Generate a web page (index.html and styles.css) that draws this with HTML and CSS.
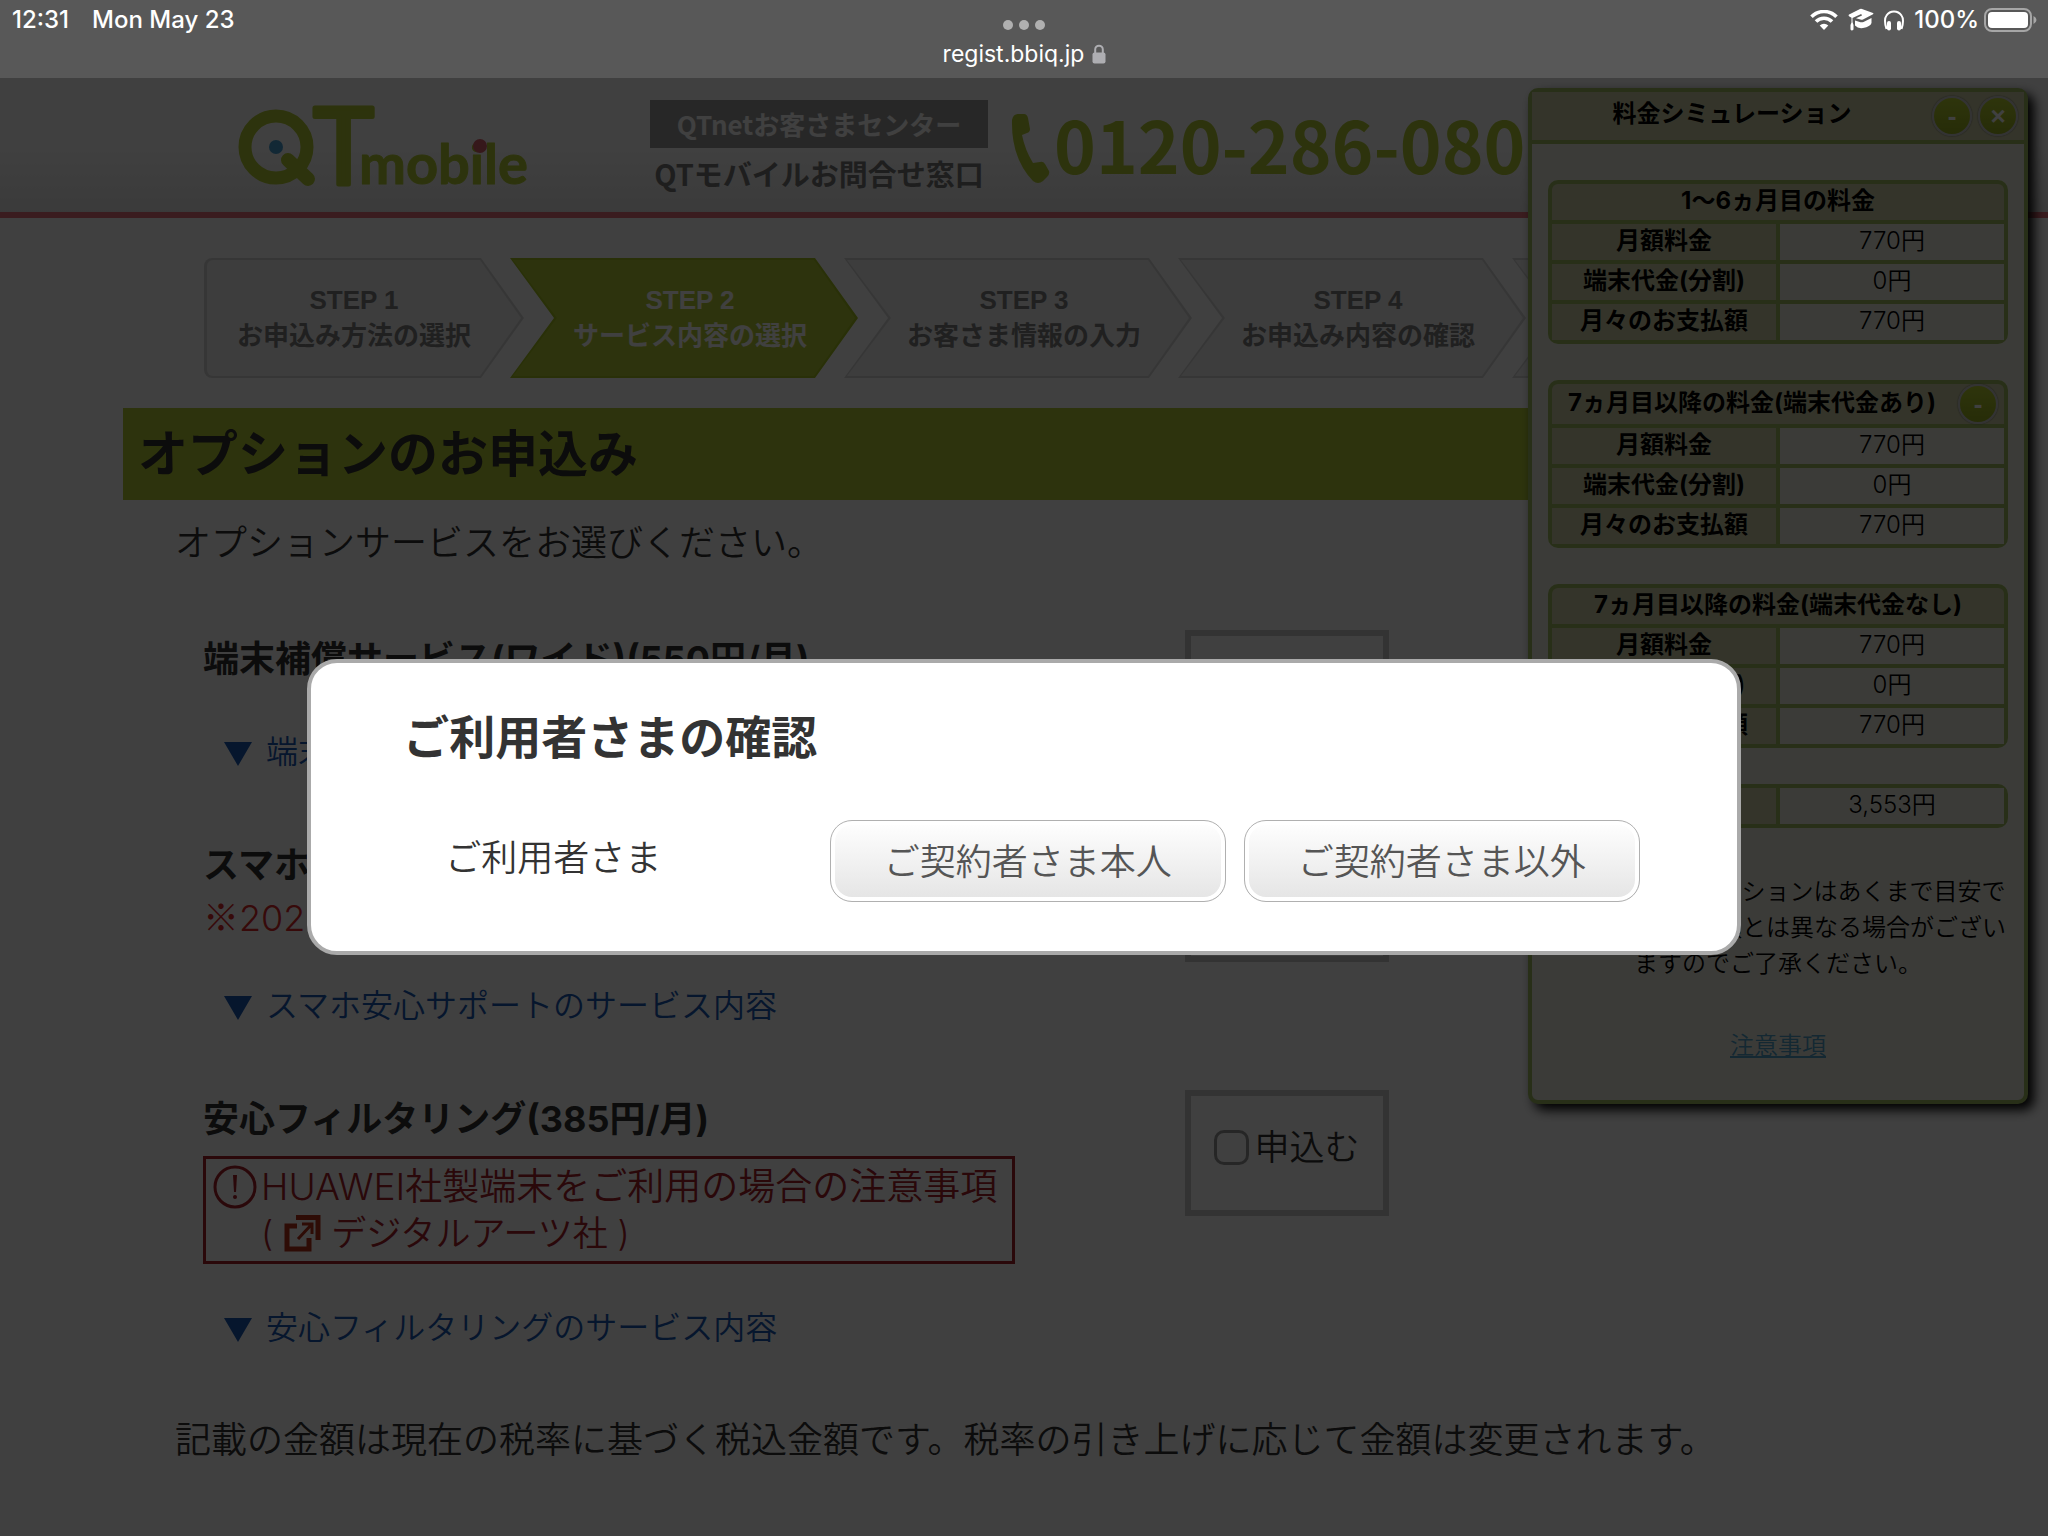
FILE: index.html
```html
<!DOCTYPE html>
<html lang="ja">
<head>
<meta charset="utf-8">
<title>オプションのお申込み</title>
<meta name="viewport" content="width=device-width">
<link rel="stylesheet" href="styles.css">
</head>
<body>
<div class="statusbar">
  <div class="status-left"><span>12:31</span><span>Mon May 23</span></div>
  <div class="status-center">
    <div class="dots"><i></i><i></i><i></i></div>
    <div class="address"><span>regist.bbiq.jp</span>
      <svg class="lock" viewBox="0 0 14 20" width="14" height="20"><path d="M3.200 9V5.500a3.800 3.800 0 0 1 7.600 0V9" fill="none" stroke="#aeaeb2" stroke-width="2"/><rect x="0.500" y="8.500" width="13" height="11" rx="2" fill="#aeaeb2"/></svg>
    </div>
  </div>
  <div class="status-right">
    <svg viewBox="0 0 28 20" width="28" height="20" fill="none" stroke="#fff"><path d="M1.500 6.800a17.500 17.500 0 0 1 25 0" stroke-width="3.600"/><path d="M6 11.600a11.200 11.200 0 0 1 16 0" stroke-width="3.600"/><path d="M14 20l-4.300-4.400a6.200 6.200 0 0 1 8.600 0z" fill="#fff" stroke="none"/></svg>
    <svg viewBox="0 0 26 24" width="26" height="24" fill="#fff"><path d="M1 6.500 12 1q1-.5 2 0l11 4q1 .6 0 1.300L15 11.500q-1.200.5-2.500.1L8 10.200l6-2.700-.8-1.500-8.700 4v4l1 3v4.500q-1.700 2-3 0V17l1-2.600V9.800L1 8.200q-1-.8 0-1.700z"/><path d="M7 12.500l5.500 1.700q1.500.4 3-.2l8-4v5q-1 3.500-8.500 5-5 .8-8-2.500z"/></svg>
    <svg viewBox="0 0 20 21" width="20" height="21"><path d="M2.500 19q-3-9.500 0-13.500a9 9 0 0 1 15 0q3 4 0 13.500" fill="none" stroke="#fff" stroke-width="2"/><rect x="3" y="11" width="4" height="9.500" rx="2" fill="#fff"/><rect x="13" y="11" width="4" height="9.500" rx="2" fill="#fff"/></svg>
    <span>100%</span>
    <svg viewBox="0 0 53 24" width="53" height="24"><rect x="1" y="1" width="46" height="22" rx="7" fill="none" stroke="#a6a6a6" stroke-width="2"/><rect x="4" y="4" width="40" height="16" rx="4" fill="#fff"/><path d="M49.500 8q3 1.500 3 4t-3 4z" fill="#a6a6a6"/></svg>
  </div>
</div>

<div class="page">
  <header class="site-header">
    <svg class="logo" viewBox="0 0 300 90" width="300" height="90" role="img" aria-label="QTmobile">
      <g fill="none" stroke="#b4cc34" stroke-linecap="round">
        <circle cx="41" cy="43" r="31" stroke-width="13"/>
        <path d="M53 56 73 75" stroke-width="14"/>
      </g>
      <circle cx="41" cy="43" r="7" fill="#4aa0d4"/>
      <text class="logo-t" x="75" y="80">T</text>
      <text class="logo-name" x="124" y="80">mobile</text>
      <circle cx="245" cy="42" r="7" fill="#d8606c"/>
    </svg>
    <div class="center-info">
      <span class="center-badge">QTnetお客さまセンター</span>
      <span class="center-desk">QTモバイルお問合せ窓口</span>
    </div>
    <div class="phone">
      <svg viewBox="0 0 40 72" width="40" height="72" fill="#b4cc34"><path d="M1 7Q2 1 7 1h6q3 0 4 4l2 11q0 3-3 4l-5 2q3 15 11 28l7-1q3-1 5 2l4 7q1 3-2 6l-4 4q-5 4-10 0Q0 45 1 7z"/></svg>
      <a href="#">0120-286-080</a>
    </div>
  </header>

  <main>
    <ol class="steps">
      <li><span>STEP 1</span><span>お申込み方法の選択</span></li>
      <li class="current"><span>STEP 2</span><span>サービス内容の選択</span></li>
      <li><span>STEP 3</span><span>お客さま情報の入力</span></li>
      <li><span>STEP 4</span><span>お申込み内容の確認</span></li>
      <li></li>
    </ol>
    <h1>オプションのお申込み</h1>
    <p class="lead">オプションサービスをお選びください。</p>

    <div class="services">
      <section class="service">
        <div>
          <h2>端末補償サービス(ワイド)(550円/月)</h2>
          <a class="more" href="#"><i></i>端末補償サービスの内容</a>
        </div>
        <div class="apply"></div>
      </section>
      <section class="service">
        <div>
          <h2>スマホ安心サポート</h2>
          <p class="note"><span class="mark">※</span>2021年</p>
          <a class="more" href="#"><i></i>スマホ安心サポートのサービス内容</a>
        </div>
        <div class="apply"></div>
      </section>
      <section class="service">
        <div>
          <h2>安心フィルタリング(385円/月)</h2>
          <a class="notice" href="#">
            <span class="notice-line"><svg viewBox="0 0 44 44" width="44" height="44"><circle cx="22" cy="22" r="20" fill="none" stroke="#a82028" stroke-width="3"/><path d="M20 10h4l-1 17h-2z" fill="#a82028"/><circle cx="22" cy="32" r="2" fill="#a82028"/></svg>HUAWEI社製端末をご利用の場合の注意事項</span>
            <span class="notice-line second">(<svg viewBox="0 0 38 38" width="38" height="38" fill="none" stroke="#b83018" stroke-width="5"><path d="M14 12H4v23h22V24"/><path d="M13 3.500h22V26"/><path d="M15 25 29 10M19 10h10v10" stroke-width="3"/></svg>デジタルアーツ社 )</span>
          </a>
          <a class="more" href="#"><i></i>安心フィルタリングのサービス内容</a>
        </div>
        <div class="apply"><label><input type="checkbox">申込む</label></div>
      </section>
    </div>
    <p class="lead tax">記載の金額は現在の税率に基づく税込金額です。税率の引き上げに応じて金額は変更されます。</p>
  </main>

  <aside class="sim">
    <div class="sim-head"><h2>料金シミュレーション</h2><button class="round" type="button">-</button><button class="round" type="button">×</button></div>
    <div class="sim-body">
      <table>
        <tr><th colspan="2">1〜6ヵ月目の料金</th></tr>
        <tr><th>月額料金</th><td>770円</td></tr>
        <tr><th>端末代金(分割)</th><td>0円</td></tr>
        <tr><th>月々のお支払額</th><td>770円</td></tr>
      </table>
      <table>
        <tr><th colspan="2"><div class="th-row"><span>7ヵ月目以降の料金(端末代金あり)</span><button class="round" type="button">-</button></div></th></tr>
        <tr><th>月額料金</th><td>770円</td></tr>
        <tr><th>端末代金(分割)</th><td>0円</td></tr>
        <tr><th>月々のお支払額</th><td>770円</td></tr>
      </table>
      <table>
        <tr><th colspan="2">7ヵ月目以降の料金(端末代金なし)</th></tr>
        <tr><th>月額料金</th><td>770円</td></tr>
        <tr><th>端末代金(分割)</th><td>0円</td></tr>
        <tr><th>月々のお支払額</th><td>770円</td></tr>
      </table>
      <table>
        <tr><th>初期費用</th><td>3,553円</td></tr>
      </table>
      <p><span class="mark">※</span>料金シミュレーションはあくまで目安ですので実際の金額とは異なる場合がございますのでご了承ください。</p>
      <a href="#">注意事項</a>
    </div>
  </aside>

  <div class="backdrop"></div>

  <div class="dialog" role="dialog" aria-labelledby="dialog-title">
    <h2 id="dialog-title">ご利用者さまの確認</h2>
    <div class="dialog-row">
      <span>ご利用者さま</span>
      <button type="button">ご契約者さま本人</button>
      <button type="button">ご契約者さま以外</button>
    </div>
  </div>
</div>
</body>
</html>
```
FILE: styles.css
```css
* { box-sizing: border-box; margin: 0; padding: 0; }

body {
  min-height: 100vh;
  display: flex;
  flex-direction: column;
  overflow-x: hidden;
  background: #fff;
  color: #333;
  font-family: Inter, "Noto Sans CJK JP", sans-serif;
  font-weight: 350;
}

a { text-decoration: none; }
svg { display: block; flex: none; }
.mark { font-family: "Noto Sans CJK JP", sans-serif; line-height: 1; }

/* device status bar */
.statusbar {
  display: grid;
  grid-template-columns: 1fr auto 1fr;
  height: 78px;
  padding: 5px 11px 0 12px;
  background: #585858;
  color: #fff;
  font: 500 24px/30px Inter, sans-serif;
}
.status-left { display: flex; gap: 23px; }
.status-center { display: flex; flex-direction: column; align-items: center; gap: 9px; padding-top: 15px; }
.dots { display: flex; gap: 6px; }
.dots i { width: 10px; height: 10px; border-radius: 50%; background: #b0b0b0; }
.address { display: flex; align-items: center; gap: 8px; font-size: 23px; font-weight: 400; }
.status-right { display: flex; justify-content: flex-end; align-items: center; gap: 10px; height: 30px; }
.status-right span { margin-right: -5px; }

.page { position: relative; flex: 1; padding-bottom: 60px; }

/* header */
.site-header {
  display: flex;
  align-items: flex-start;
  height: 140px;
  padding: 22px 0 0 235px;
  border-bottom: 6px solid #e8707c;
  background: linear-gradient(#fff 50%, #e8e8e8);
}
.logo { margin-top: 4px; overflow: visible; }
.logo text { fill: #b4cc34; stroke: #b4cc34; stroke-linejoin: round; }
.logo-t { font: 400 104px Inter, sans-serif; stroke-width: 5px; }
.logo-name { font: 700 56px Lato, sans-serif; stroke-width: 1px; }
.center-info {
  width: 338px;
  margin-left: 115px;
  text-align: center;
  font-family: "Noto Sans CJK JP", sans-serif;
  font-weight: 700;
}
.center-badge { display: block; background: #9c9c9c; color: #fff; font-size: 26px; line-height: 48px; }
.center-desk { display: block; margin-top: 3px; color: #787878; font-size: 29px; line-height: 44px; }
.phone { display: flex; align-items: center; gap: 3px; margin: 9px 0 0 23px; height: 80px; }
.phone a {
  align-self: flex-start;
  color: #b4cc34;
  font: 700 71px/68px "Noto Sans CJK JP", sans-serif;
  white-space: nowrap;
}

/* main column */
main { padding: 40px 123px 0; }

.steps { display: flex; margin-left: 81px; list-style: none; }
.steps li {
  position: relative;
  z-index: 0;
  flex: none;
  display: flex;
  flex-direction: column;
  align-items: center;
  justify-content: center;
  width: 348px;
  height: 120px;
  margin-left: -14px;
  padding-left: 12px;
  clip-path: polygon(0 0, 305px 0, 100% 50%, 305px 100%, 0 100%, 44px 50%);
  background: #d8d8d8;
  color: #808080;
  font: 700 26px/36px "Liberation Sans", "Noto Sans CJK JP", sans-serif;
}
.steps li::before {
  content: "";
  position: absolute;
  inset: 2px 3px;
  z-index: -1;
  clip-path: polygon(0 0, 301px 0, 100% 50%, 301px 100%, 0 100%, 44px 50%);
  background: #f2f2f2;
}
.steps li:first-child {
  width: 320px;
  margin-left: 0;
  padding: 0 20px 0 0;
  border-radius: 8px;
  clip-path: polygon(0 0, 277px 0, 100% 50%, 277px 100%, 0 100%);
}
.steps li:first-child::before {
  border-radius: 6px;
  clip-path: polygon(0 0, 273px 0, 100% 50%, 273px 100%, 0 100%);
}
.steps .current { background: #a4c020; color: #fff; }
.steps .current::before { background: #b4cc34; }

h1 {
  margin-top: 30px;
  padding: 0 15px;
  background: #b4cc34;
  font-size: 50px;
  font-weight: 700;
  line-height: 92px;
}
.lead { margin-top: 16px; padding-left: 52px; font-size: 36px; line-height: 54px; }
.tax { margin-top: 61px; }

.services { display: grid; gap: 60px; margin-top: 60px; padding-left: 80px; }
.service { display: grid; grid-template-columns: 57% 204px; align-items: start; }
.service h2 { font-size: 36px; font-weight: 700; line-height: 58px; }
.note { color: #dc2828; font-size: 36px; line-height: 48px; }
.more {
  display: flex;
  align-items: center;
  gap: 14px;
  margin: 40px 0 0 21px;
  color: #1858b4;
  font-size: 32px;
  line-height: 48px;
}
.more i { margin-top: 3px; border: solid transparent; border-width: 24px 14px 0; border-top-color: #1858b4; }
.notice {
  display: block;
  width: 812px;
  height: 108px;
  margin-top: 8px;
  padding: 5px 7px;
  border: 3px solid #a82028;
  color: #a82028;
}
.notice-line { display: flex; align-items: center; gap: 4px; font-size: 37px; line-height: 46px; white-space: nowrap; }
.second { gap: 10px; padding-left: 48px; font-size: 35px; }
.apply {
  display: flex;
  align-items: center;
  justify-content: center;
  height: 126px;
  border: 6px solid #ccc;
}
.apply label { display: flex; align-items: center; gap: 6px; padding-bottom: 12px; font-size: 35px; line-height: 48px; }
.apply input {
  appearance: none;
  width: 35px;
  height: 35px;
  border: 3px solid #999;
  border-radius: 10px;
}

/* price simulation panel */
.sim {
  position: absolute;
  top: 10px;
  right: 20px;
  width: 500px;
  border: 4px solid #a0bc60;
  border-radius: 10px;
  background: #ecece0;
  box-shadow: 6px 6px 12px #000;
  color: #000;
  font-size: 24px;
  line-height: 36px;
}
.sim-head {
  display: flex;
  align-items: center;
  gap: 6px;
  height: 52px;
  padding: 0 6px;
  border-bottom: 4px solid #a0bc60;
  background: #d0d0a8;
}
.sim-head h2 { flex: 1; font-size: 24px; font-weight: 700; text-align: center; padding-bottom: 4px; }
.round {
  flex: none;
  width: 40px;
  height: 40px;
  border: 2px solid #ccc;
  border-radius: 50%;
  background: linear-gradient(#b8d030, #98b020);
  box-shadow: 0 0 2px #666;
  color: #fff;
  font: 700 26px/30px "Liberation Sans", sans-serif;
}
.sim-body { display: flex; flex-direction: column; gap: 36px; padding: 36px 16px 30px; text-align: center; }
.sim-body table {
  width: 100%;
  table-layout: fixed;
  border-collapse: separate;
  border-spacing: 4px;
  border-radius: 10px;
  background: #a0bc60;
}
.sim-body th { height: 36px; background: #d0d0a8; font-weight: 700; line-height: 34px; padding-bottom: 2px; }
.sim-body td { background: #ecece0; line-height: 34px; padding-bottom: 2px; }
.sim-body th[colspan] { border-radius: 6px 6px 0 0; }
.sim-body th:has(.th-row) { padding: 0; }
.th-row { display: flex; align-items: center; justify-content: space-between; padding: 0 6px 0 16px; }
.th-row span { padding-bottom: 2px; white-space: nowrap; }
.sim-body p { margin-top: 10px; }
.sim-body a { margin: 10px 0 6px; color: #50a0c8; text-decoration: underline; }

.backdrop { position: absolute; inset: 0; background: rgba(0, 0, 0, .75); }

/* confirmation dialog */
.dialog {
  position: absolute;
  top: 581px;
  left: 15%;
  width: 70%;
  height: 296px;
  padding: 40px 97px 0 92px;
  border: 4px solid #aaa;
  border-radius: 30px;
  background: #fff;
}
.dialog h2 { font-size: 46px; font-weight: 700; line-height: 68px; }
.dialog-row { display: flex; align-items: center; gap: 18px; margin-top: 49px; padding-left: 42px; font-size: 36px; }
.dialog-row span { flex: 1; padding-bottom: 12px; }
.dialog-row button {
  width: 396px;
  height: 82px;
  padding-bottom: 4px;
  border: 1px solid #b0b0b0;
  border-radius: 22px;
  background: linear-gradient(#fff, #e4e4e4);
  box-shadow: inset 0 0 0 4px #fff;
  color: #555;
  font: inherit;
}
```
